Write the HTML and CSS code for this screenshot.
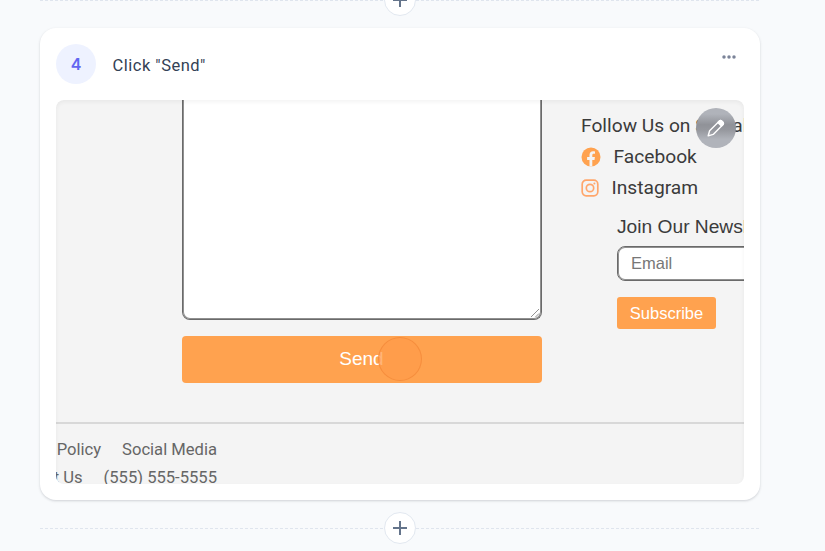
FILE: index.html
```html
<!DOCTYPE html>
<html lang="en">
<head>
<meta charset="utf-8">
<title>Step editor</title>
<link rel="stylesheet" href="styles.css">
</head>
<body>
<main class="steps">
  <div class="divider"><button class="add" aria-label="Add step"><svg width="14" height="14" viewBox="0 0 14 14"><path d="M7 0v14M0 7h14"/></svg></button></div>
  <article class="card">
    <header class="head">
      <span class="number">4</span>
      <h2 class="title">Click "Send"</h2>
      <button class="more" aria-label="More"><svg width="14" height="4" viewBox="0 0 14 4"><circle cx="2" cy="2" r="1.750"/><circle cx="7" cy="2" r="1.750"/><circle cx="12" cy="2" r="1.750"/></svg></button>
    </header>
    <div class="shot">
      <div class="content">
        <div class="form">
          <div class="message"><svg class="grip" width="10" height="10" viewBox="0 0 10 10"><path d="M1 9L9 1M5.500 9L9 5.500"/></svg></div>
          <div class="send">Send<span class="target"></span></div>
        </div>
        <aside class="side">
          <div class="follow">Follow Us on Social Media</div>
          <div class="social facebook"><svg width="20" height="20" viewBox="0 0 20 20"><circle cx="10" cy="10" r="9.500" fill="#ffa24f"/><path d="M8.500 19.500v-6.600H6.100v-2.800h2.400V8c0-2.500 1.400-3.800 3.600-3.800.9 0 1.700.1 1.900.2v2.300h-1.200c-1.100 0-1.500.6-1.500 1.400v2h2.600l-.4 2.800h-2.200v6.600z" fill="#f4f4f4"/></svg><span>Facebook</span></div>
          <div class="social instagram"><svg width="18" height="18" viewBox="0 0 18 18" fill="none" stroke="#ffa66b" stroke-width="1.700"><rect x="1.200" y="1.200" width="15.600" height="15.600" rx="4"/><circle cx="9" cy="9" r="3.700"/><circle cx="13.400" cy="4.600" r="1" fill="#ffa66b" stroke="none"/></svg><span>Instagram</span></div>
          <div class="news">
            <div class="join">Join Our Newsletter</div>
            <div class="email">Email</div>
            <div class="subscribe">Subscribe</div>
          </div>
        </aside>
      </div>
      <footer class="foot">
        <div class="links"><span>Privacy Policy</span><span>Social Media</span></div>
        <div class="links second"><span>Contact Us</span><span>(555) 555-5555</span></div>
      </footer>
      <button class="edit" aria-label="Edit"><svg width="20" height="20" viewBox="0 0 20 20"><path d="M2.200 17.800l1.400-5L13.200 3.200a1.800 1.800 0 0 1 2.500 0l1.100 1.100a1.800 1.800 0 0 1 0 2.500L7.200 16.400z"/><path class="tip" d="M11.900 4.500l1.500-1.500a1.600 1.600 0 0 1 2.300 0l1.300 1.300a1.600 1.600 0 0 1 0 2.300l-1.500 1.500z"/></svg></button>
    </div>
  </article>
  <div class="divider"><button class="add" aria-label="Add step"><svg width="14" height="14" viewBox="0 0 14 14"><path d="M7 0v14M0 7h14"/></svg></button></div>
</main>
</body>
</html>
```
FILE: styles.css
```css
* { box-sizing: border-box; }
body { margin: 0; height: 551px; overflow: hidden; background: #f8fafc; font-family: Roboto, "Liberation Sans", sans-serif; }
button { border: 0; padding: 0; background: none; }
.steps { width: 720px; margin: -16px 0 0 40px; display: flex; flex-direction: column; gap: 12px; }
.divider { height: 32px; display: flex; align-items: center; }
.divider::before, .divider::after { content: ""; flex: 1; height: 1px; background: repeating-linear-gradient(90deg, #dfe5ee 0 3px, transparent 3px 5px); }
.add { width: 32px; height: 32px; border: 1px solid #e2e8f0; border-radius: 50%; background: #fff; display: grid; place-items: center; }
.add svg { stroke: #64748b; stroke-width: 2; }
.card { height: 472px; padding: 16px; border-radius: 16px; background: #fff; box-shadow: 0 1px 3px rgba(15, 23, 42, .13), 0 1px 2px rgba(15, 23, 42, .05); }
.head { height: 40px; margin-bottom: 16px; display: flex; align-items: center; }
.number { width: 40px; height: 40px; border-radius: 50%; background: #eef2ff; color: #6366f1; display: grid; place-items: center; font: 600 16px/38px Inter, sans-serif; }
.title { margin: 3px 0 0 16.500px; color: #334155; font: 400 16.500px/24px Roboto, sans-serif; letter-spacing: .5px; }
.more { height: 4px; margin: -14px 8px 0 auto; display: flex; }
.more svg { fill: #7b8398; }
.shot { position: relative; height: 384px; border-radius: 8px; overflow: hidden; background: #f4f4f4; color: #3b3b3b; white-space: nowrap; }
.shot::after { content: ""; position: absolute; inset: 0; border-radius: 8px; box-shadow: inset 0 2px 4px rgba(0, 0, 0, .05); }
.content { height: 324px; padding-left: 125.500px; display: flex; border-bottom: 2px solid #d8d8d8; }
.form { width: 360px; flex: none; }
.message { height: 222px; margin-top: -2px; border: 1px solid #6a6a6a; border-top: 0; border-radius: 0 0 8px 8px; box-shadow: inset 0 0 0 1px #909090; background: #fff; display: flex; justify-content: flex-end; align-items: flex-end; }
.grip { margin: 0 1px 1px 0; stroke: #777; stroke-width: .8; }
.send { position: relative; height: 46.500px; margin-top: 16px; border-radius: 4px; background: #ffa24f; color: #fff; text-align: center; font: 19px/46px "Liberation Sans", sans-serif; }
.target { position: absolute; left: 196.500px; top: 1px; width: 44px; height: 44px; border: 1.500px solid rgba(240, 132, 52, .6); border-radius: 50%; background: rgba(255, 155, 73, .75); }
.side { width: 270px; padding: 10px 0 0 39.500px; flex: none; font-size: 19.200px; }
.follow { height: 31px; line-height: 31px; }
.social { height: 31px; display: flex; align-items: center; }
.social svg { position: relative; left: -.500px; }
.social span { margin-left: 12.500px; }
.news { padding: 13px 0 0 36px; font-family: "Liberation Sans", sans-serif; }
.join { height: 23px; font-size: 19.200px; line-height: 22px; }
.email { width: 220px; height: 35px; margin-top: 7px; padding-left: 13px; border: 1px solid #6a6a6a; border-radius: 8px; box-shadow: inset 0 0 0 1px #909090; background: #fff; color: #777; font-size: 16.500px; line-height: 33px; }
.subscribe { width: 99px; height: 32px; margin-top: 16px; border-radius: 3px; background: #ffa24f; color: #fff; text-align: center; font-size: 16.500px; line-height: 32px; }
.foot { width: 161px; padding-top: 12px; color: #666; font-size: 16.600px; }
.links { height: 28px; line-height: 28px; display: flex; justify-content: flex-end; gap: 21px; }
.edit { position: absolute; left: 640px; top: 8px; width: 40px; height: 40px; border-radius: 50%; background: linear-gradient(#b0b3ba 0 15%, #909298 42%, #96989e 55%, #b0b3ba 78%); display: grid; place-items: center; }
.edit svg { fill: none; stroke: #fff; stroke-width: 1.400; stroke-linejoin: round; }
.edit .tip { fill: #fff; }
```
